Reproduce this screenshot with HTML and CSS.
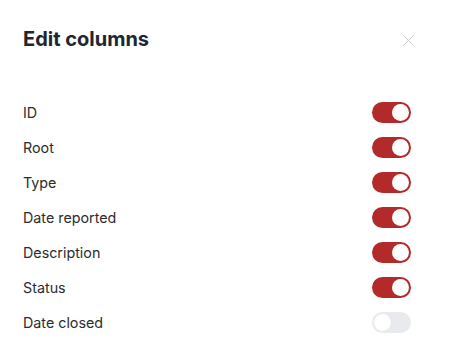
FILE: index.html
```html
<!DOCTYPE html>
<html lang="en">
<head>
<meta charset="utf-8">
<title>Edit columns</title>
<link rel="stylesheet" href="styles.css">
</head>
<body>
<div class="dialog">
  <div class="header">
    <h2 class="title">Edit columns</h2>
    <button class="close" aria-label="Close">
      <svg width="11" height="11" viewBox="0 0 11 11"><path d="M0.5 0.5 L10.5 10.5 M10.5 0.5 L0.5 10.5" stroke="#c9cbcf" stroke-width="1" fill="none"/></svg>
    </button>
  </div>
  <ul class="list">
    <li class="row"><span class="label">ID</span><span class="toggle on"><span class="knob"></span></span></li>
    <li class="row"><span class="label">Root</span><span class="toggle on"><span class="knob"></span></span></li>
    <li class="row"><span class="label">Type</span><span class="toggle on"><span class="knob"></span></span></li>
    <li class="row"><span class="label">Date reported</span><span class="toggle on"><span class="knob"></span></span></li>
    <li class="row"><span class="label">Description</span><span class="toggle on"><span class="knob"></span></span></li>
    <li class="row"><span class="label">Status</span><span class="toggle on"><span class="knob"></span></span></li>
    <li class="row"><span class="label">Date closed</span><span class="toggle off"><span class="knob"></span></span></li>
  </ul>
</div>
</body>
</html>
```

FILE: styles.css
```css
html, body {
  margin: 0;
  padding: 0;
  background: #ffffff;
}
body {
  font-family: Inter, Roboto, "Liberation Sans", Arial, sans-serif;
}
.dialog {
  padding: 27px 40px 0 23px;
}
.header {
  display: flex;
  align-items: center;
  justify-content: space-between;
  height: 24px;
}
.title {
  margin: 0;
  font-size: 20px;
  line-height: 24px;
  font-weight: 700;
  color: #1e2631;
}
.close {
  border: 0;
  background: none;
  padding: 0;
  margin: 2px -3px 0 0;
  width: 11px;
  height: 11px;
  display: flex;
}
.list {
  list-style: none;
  margin: 44px 0 0 0;
  padding: 0;
}
.row {
  display: flex;
  align-items: center;
  justify-content: space-between;
  height: 35px;
}
.label {
  font-size: 14.3px;
  color: #2a2c30;
  line-height: 18px;
}
.toggle {
  width: 39px;
  height: 21px;
  border-radius: 11px;
  display: flex;
  align-items: center;
  padding: 0 2px;
  box-sizing: border-box;
}
.toggle.on {
  background: #b22a2a;
  justify-content: flex-end;
}
.toggle.off {
  background: #e9eaed;
  justify-content: flex-start;
}
.knob {
  width: 17px;
  height: 17px;
  border-radius: 50%;
  background: #ffffff;
}
```
